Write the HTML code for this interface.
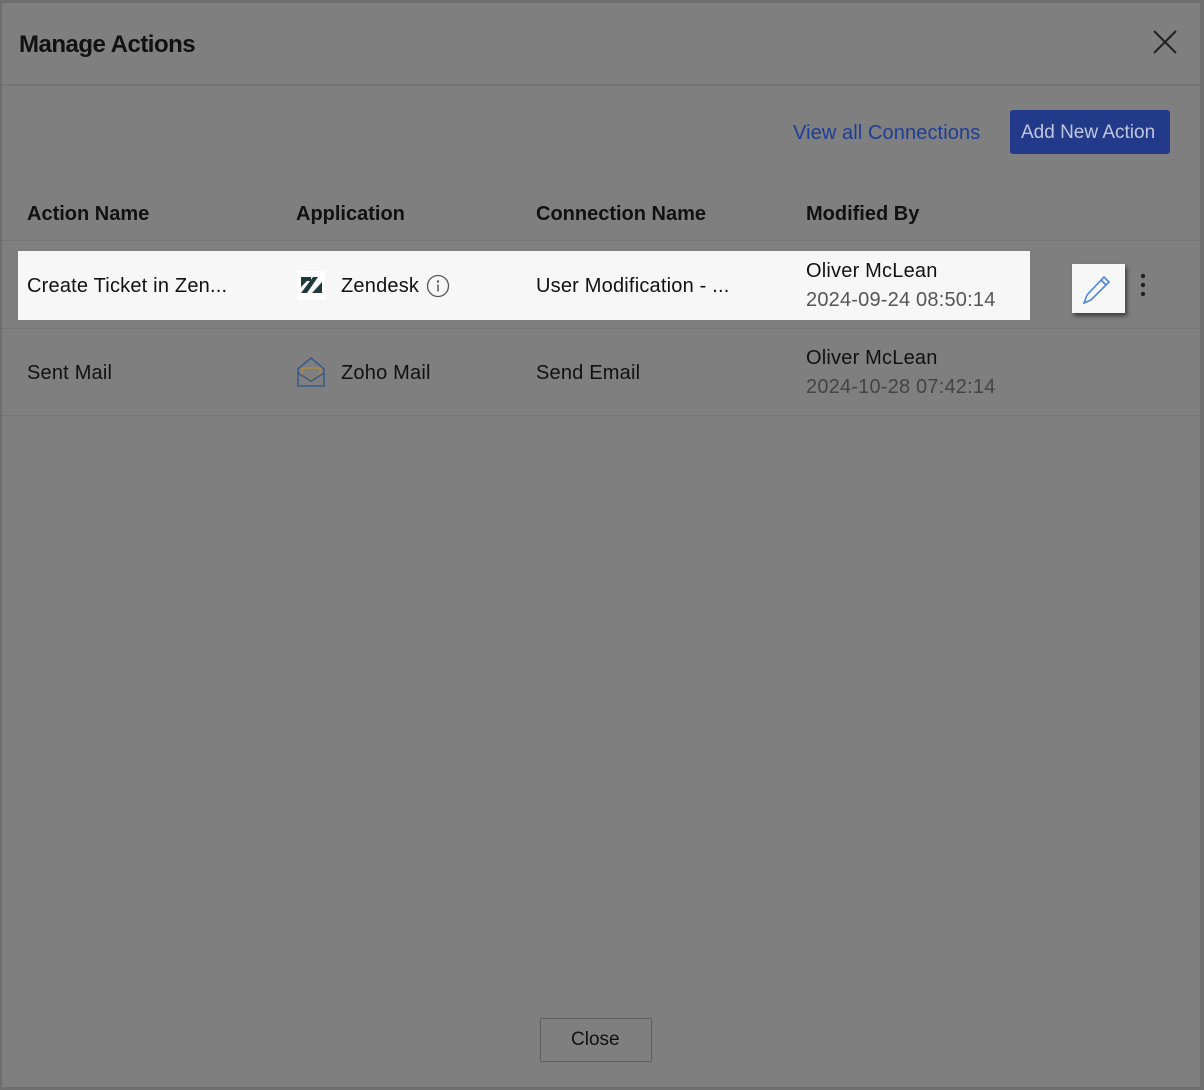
<!DOCTYPE html>
<html><head><style>
body{margin:0;width:1204px;height:1090px;background:#6e6e6e;font-family:"Liberation Sans",sans-serif;overflow:hidden}
.m{position:absolute;left:2px;top:3px;width:1198px;height:1084px;background:#7f7f7f}
.t{position:absolute;font-size:20px;color:#111;white-space:nowrap;letter-spacing:0.2px}
.b{font-weight:bold;letter-spacing:0}
.line{position:absolute;left:2px;width:1198px;height:2px;background:#757575}
</style></head><body>
<div class="m"></div>
<div class="t b" style="left:19px;top:31px;font-size:24px;letter-spacing:-0.5px">Manage Actions</div>
<svg style="position:absolute;left:1152px;top:29px" width="26" height="26"><path d="M2 2L24 24M24 2L2 24" stroke="#222" stroke-width="2"/></svg>
<div class="line" style="top:84px"></div>
<div class="t" style="left:793px;top:122px;color:#1e3d96;letter-spacing:0.1px">View all Connections</div>
<div style="position:absolute;left:1010px;top:110px;width:160px;height:44px;background:#223a89;border-radius:3px"></div>
<div class="t" style="left:1021px;top:122px;color:#bfc7de;font-size:19px;letter-spacing:0">Add New Action</div>
<div class="t b" style="left:27px;top:203px">Action Name</div>
<div class="t b" style="left:296px;top:203px">Application</div>
<div class="t b" style="left:536px;top:203px">Connection Name</div>
<div class="t b" style="left:806px;top:203px">Modified By</div>
<div class="line" style="top:240px;height:1px"></div>
<div style="position:absolute;left:18px;top:251px;width:1012px;height:69px;background:#f7f7f7"></div>
<div class="t" style="left:27px;top:275px">Create Ticket in Zen...</div>
<div style="position:absolute;left:297px;top:271px;width:28px;height:29px;background:#fff"></div>
<svg style="position:absolute;left:300px;top:276px" width="22" height="18"><path d="M1 1h10v4h-4L1 11z M1 17L13 1h5L7 17z M22 17H12L22 6z" fill="#1f3a3a"/></svg>
<div class="t" style="left:341px;top:275px">Zendesk</div>
<svg style="position:absolute;left:426px;top:274px" width="24" height="24"><circle cx="12" cy="12" r="10.5" fill="none" stroke="#555" stroke-width="1.3"/><circle cx="12" cy="7.5" r="1.2" fill="#555"/><path d="M12 10.5v7" stroke="#555" stroke-width="1.5"/></svg>
<div class="t" style="left:536px;top:275px">User Modification - ...</div>
<div class="t" style="left:806px;top:260px">Oliver McLean</div>
<div class="t" style="left:806px;top:289px;color:#555">2024-09-24 08:50:14</div>
<div style="position:absolute;left:1072px;top:264px;width:53px;height:49px;background:#f7f7f7;box-shadow:2px 3px 4px rgba(0,0,0,.5)"></div>
<svg style="position:absolute;left:1080px;top:272px" width="32" height="34"><path d="M4 31L7 23L24 5L29 10L11 28z M21 8L26 13" fill="none" stroke="#4a86e0" stroke-width="1.6"/></svg>
<svg style="position:absolute;left:1138px;top:272px" width="10" height="28"><circle cx="5" cy="4" r="2.2" fill="#222"/><circle cx="5" cy="13" r="2.2" fill="#222"/><circle cx="5" cy="22" r="2.2" fill="#222"/></svg>
<div class="line" style="top:328px;height:1px"></div>
<div class="t" style="left:27px;top:362px">Sent Mail</div>
<svg style="position:absolute;left:296px;top:356px" width="30" height="32"><path d="M2 13L15 2L28 13V30H2z" fill="none" stroke="#3a5a8a" stroke-width="1.6"/><path d="M6 12h18v7l-9 5-9-5z" fill="none" stroke="#b08a40" stroke-width="1.6"/><path d="M2 17l13 8 13-8" fill="none" stroke="#3a5a8a" stroke-width="1.6"/></svg>
<div class="t" style="left:341px;top:362px">Zoho Mail</div>
<div class="t" style="left:536px;top:362px">Send Email</div>
<div class="t" style="left:806px;top:347px">Oliver McLean</div>
<div class="t" style="left:806px;top:376px;color:#444">2024-10-28 07:42:14</div>
<div class="line" style="top:415px;height:1px"></div>
<div style="position:absolute;left:540px;top:1018px;width:110px;height:42px;border:1px solid #5e5e5e;border-radius:2px;background:#7f7f7f"></div>
<div class="t" style="left:571px;top:1029px;font-size:19px;letter-spacing:0">Close</div>
</body></html>
